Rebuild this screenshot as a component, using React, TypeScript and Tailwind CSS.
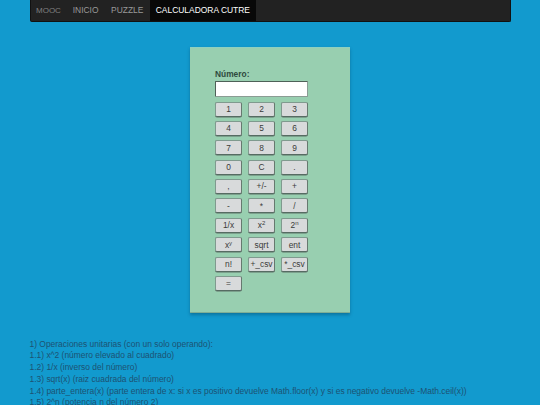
const rows: React.ReactNode[][] = [
  ['1', '2', '3'],
  ['4', '5', '6'],
  ['7', '8', '9'],
  ['0', 'C', '.'],
  [',', '+/-', '+'],
  ['-', '*', '/'],
  ['1/x', <>x<sup className="text-[6px] leading-none">2</sup></>, <>2<sup className="text-[6px] leading-none">n</sup></>],
  [<>x<sup className="text-[6px] leading-none">y</sup></>, 'sqrt', 'ent'],
  ['n!', '+_csv', '*_csv'],
  ['='],
]

const lines = [
  '1) Operaciones unitarias (con un solo operando):',
  '1.1) x^2 (número elevado al cuadrado)',
  '1.2) 1/x (inverso del número)',
  '1.3) sqrt(x) (raiz cuadrada del número)',
  '1.4) parte_entera(x) (parte entera de x: si x es positivo devuelve Math.floor(x) y si es negativo devuelve -Math.ceil(x))',
  '1.5) 2^n (potencia n del número 2)',
]

function CalcButton({ children }: { children: React.ReactNode }) {
  return (
    <button className="w-[27px] h-[15px] flex items-center justify-center rounded-[2px] border border-[#7f9a8e] border-b-[#566b62] border-r-[#66796f] bg-[#d8dadb] text-[8.4px] leading-none text-[#3a3a3a] shadow-[0_0.5px_0_#5f7268]">
      <span className="whitespace-nowrap">{children}</span>
    </button>
  )
}

export default function App() {
  return (
    <div className="h-[405px] overflow-hidden bg-[#129ace] font-['Liberation_Sans',Arial,sans-serif]">
      <nav className="mx-[29.5px] h-[22px] flex bg-[#222] border border-t-0 border-[#111] rounded-b-[2px] text-[8.45px]">
        <a className="pl-[5.5px] pr-[5.5px] flex items-center text-[#808080] text-[8px]">MOOC</a>
        <a className="px-[6.3px] flex items-center text-[#999]">INICIO</a>
        <a className="px-[6.3px] flex items-center text-[#999]">PUZZLE</a>
        <a className="pl-[6px] pr-[6.5px] flex items-center bg-[#080808] text-white">CALCULADORA CUTRE</a>
      </nav>

      <main className="mt-[25px] mx-auto w-[160px] h-[266px] bg-[#98cfb0] border-t border-[#8fd0c0] border-b border-b-[#7fae95] shadow-[0_2px_3px_rgba(0,60,90,0.4)] pl-[25px] pt-[20px]">
        <label className="block text-[8.4px] leading-[12px] font-bold text-[#2f4a3e]">Número:</label>
        <input className="block mt-[0.5px] w-[93px] h-[16px] bg-white border border-[#8b9c94] border-t-[#4f6158] border-l-[#4f6158] rounded-[1px]" />
        <div className="mt-[5px] flex flex-col gap-[4.4px]">
          {rows.map((row, i) => (
            <div key={i} className="flex gap-[6px]">
              {row.map((b, j) => (
                <CalcButton key={j}>{b}</CalcButton>
              ))}
            </div>
          ))}
        </div>
      </main>

      <div className="mt-[25.5px] ml-[29.5px] text-[8.45px] leading-[11.8px] text-[#1d5273] whitespace-nowrap">
        {lines.map((l) => (
          <p key={l}>{l}</p>
        ))}
      </div>
    </div>
  )
}
